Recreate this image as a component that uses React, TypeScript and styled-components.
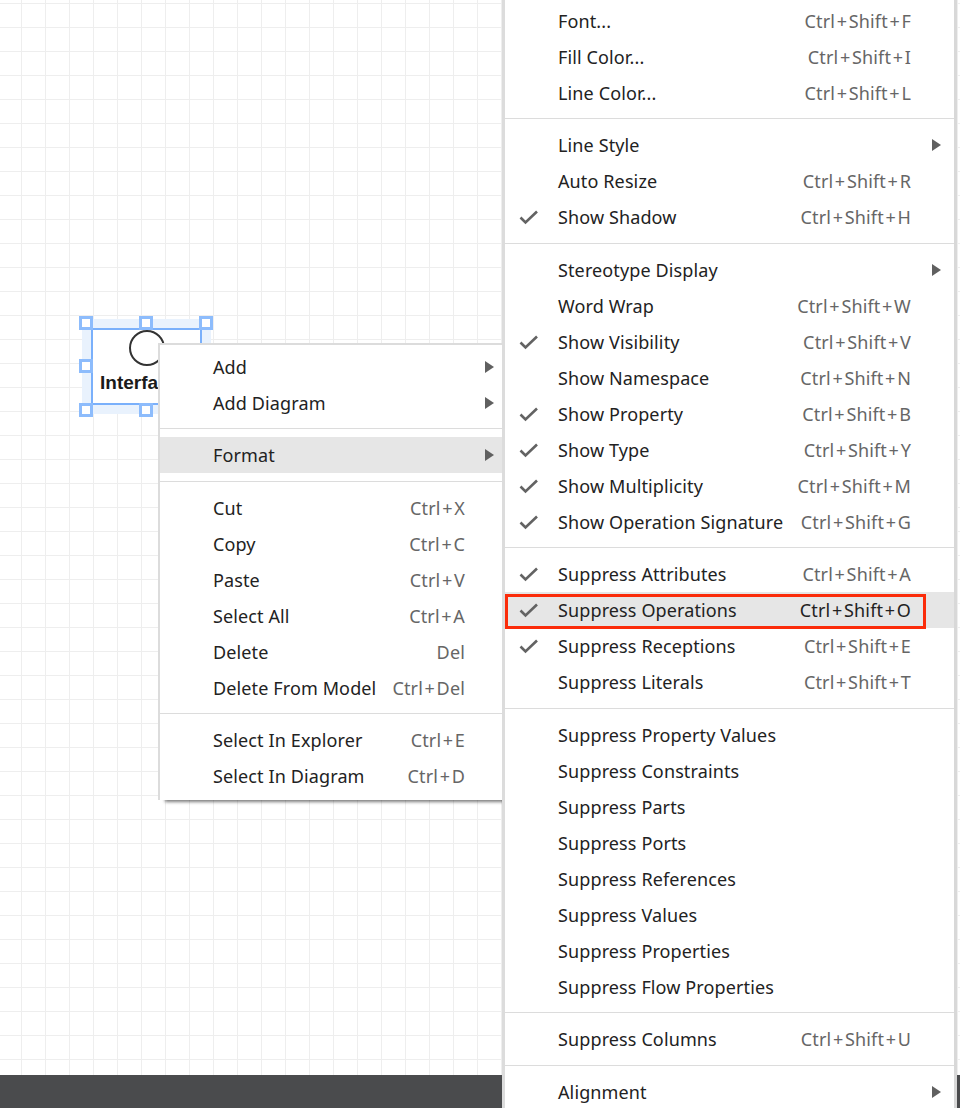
import React from "react";
import styled, { createGlobalStyle } from "styled-components";

const GlobalStyle = createGlobalStyle`
    html, body {
        margin: 0;
        padding: 0;
        background: #ffffff;
    }
`;

const Canvas = styled.div`
    position: relative;
    width: 960px;
    height: 1108px;
    overflow: hidden;
    display: flex;
    flex-direction: column;
    justify-content: flex-end;
    background-color: #ffffff;
    background-image:
        linear-gradient(to right, #eeeeee 1px, transparent 1px),
        linear-gradient(to bottom, #eeeeee 1px, transparent 1px);
    background-size: 24px 24px;
    background-position: 21px 3px;
    font-family: "Noto Sans", sans-serif;
`;

const BottomBar = styled.div`
    flex: none;
    height: 33px;
    background: #4a4b4d;
`;

const Node = styled.div`
    position: absolute;
    left: 91px;
    top: 328px;
    width: 111px;
    height: 77px;
    box-sizing: border-box;
    display: flex;
    flex-direction: column;
    align-items: center;
    gap: 6px;
    background: #ffffff;
    border: 2px solid #7ab0fb;
    box-shadow: 0 0 0 9px #e9f2fd;
`;

const NodeCircle = styled.div`
    flex: none;
    width: 36px;
    height: 36px;
    box-sizing: border-box;
    border: 2px solid #333333;
    border-radius: 50%;
    background: #ffffff;
`;

const NodeLabel = styled.span`
    align-self: flex-start;
    margin-left: 7px;
    font-family: "Liberation Sans", Arial, sans-serif;
    font-weight: 700;
    font-size: 19px;
    line-height: 22px;
    color: #1a1a1a;
    white-space: nowrap;
`;

const Handle = styled.div<{ $x: number; $y: number }>`
    position: absolute;
    left: ${(p) => p.$x - 7}px;
    top: ${(p) => p.$y - 7}px;
    width: 14px;
    height: 14px;
    box-sizing: border-box;
    background: #ffffff;
    border: 3px solid #8dbcfc;
`;

const Menu = styled.div<{ $left: number; $top: number; $width: number; $popup?: boolean }>`
    position: absolute;
    left: ${(p) => p.$left}px;
    top: ${(p) => p.$top}px;
    width: ${(p) => p.$width}px;
    box-sizing: border-box;
    display: flex;
    flex-direction: column;
    background: #ffffff;
    border-left: ${(p) => (p.$popup ? "2px" : "3px")} solid #dcdcdc;
    border-top: ${(p) => (p.$popup ? "2px solid #dcdcdc" : "none")};
    border-right: ${(p) => (p.$popup ? "none" : "3px solid #d8d8d8")};
    padding: ${(p) => (p.$popup ? "4px 0 6px" : "2.5px 0 0")};
    box-shadow: ${(p) => (p.$popup ? "6px 3px 3px -1px rgba(0, 0, 0, 0.5)" : "none")};
`;

const Row = styled.div<{ $active?: boolean; $gutter: number }>`
    flex: none;
    height: 36px;
    box-sizing: border-box;
    padding-left: 14px;
    display: grid;
    grid-template-columns: 39px 1fr auto ${(p) => p.$gutter}px;
    align-items: center;
    background: ${(p) => (p.$active ? "#e6e6e6" : "transparent")};
    font-size: 18px;
    color: #222222;
    white-space: nowrap;
`;

const Label = styled.span`
    grid-column: 2;
    letter-spacing: 0.12px;
`;

const Shortcut = styled.span<{ $active?: boolean }>`
    grid-column: 3;
    letter-spacing: 0.15px;
    color: ${(p) => (p.$active ? "#222222" : "#666666")};
`;

const Plus = styled.span`
    margin: 0 1.6px;
`;

const CheckMark = styled.svg`
    grid-column: 1;
    display: block;
    width: 20px;
    height: 16px;
`;

const Arrow = styled.svg<{ $offset: number }>`
    grid-column: 4;
    justify-self: end;
    display: block;
    width: 9px;
    height: 12px;
    margin-right: ${(p) => p.$offset}px;
`;

const Separator = styled.div`
    flex: none;
    height: 16.5px;
    display: flex;
    align-items: center;

    &::after {
        content: "";
        flex: 1;
        height: 1px;
        background: #dcdcdc;
    }
`;

const Highlight = styled.div`
    position: absolute;
    left: 505px;
    top: 594px;
    width: 421px;
    height: 35px;
    box-sizing: border-box;
    border: 3px solid #fb2c0a;
`;

type Item = {
    label?: string;
    shortcut?: string;
    checked?: boolean;
    submenu?: boolean;
    active?: boolean;
};

const SEP: Item = {};

const leftItems: Item[] = [
    { label: "Add", submenu: true },
    { label: "Add Diagram", submenu: true },
    SEP,
    { label: "Format", submenu: true, active: true },
    SEP,
    { label: "Cut", shortcut: "Ctrl+X" },
    { label: "Copy", shortcut: "Ctrl+C" },
    { label: "Paste", shortcut: "Ctrl+V" },
    { label: "Select All", shortcut: "Ctrl+A" },
    { label: "Delete", shortcut: "Del" },
    { label: "Delete From Model", shortcut: "Ctrl+Del" },
    SEP,
    { label: "Select In Explorer", shortcut: "Ctrl+E" },
    { label: "Select In Diagram", shortcut: "Ctrl+D" },
];

const rightItems: Item[] = [
    { label: "Font...", shortcut: "Ctrl+Shift+F" },
    { label: "Fill Color...", shortcut: "Ctrl+Shift+I" },
    { label: "Line Color...", shortcut: "Ctrl+Shift+L" },
    SEP,
    { label: "Line Style", submenu: true },
    { label: "Auto Resize", shortcut: "Ctrl+Shift+R" },
    { label: "Show Shadow", shortcut: "Ctrl+Shift+H", checked: true },
    SEP,
    { label: "Stereotype Display", submenu: true },
    { label: "Word Wrap", shortcut: "Ctrl+Shift+W" },
    { label: "Show Visibility", shortcut: "Ctrl+Shift+V", checked: true },
    { label: "Show Namespace", shortcut: "Ctrl+Shift+N" },
    { label: "Show Property", shortcut: "Ctrl+Shift+B", checked: true },
    { label: "Show Type", shortcut: "Ctrl+Shift+Y", checked: true },
    { label: "Show Multiplicity", shortcut: "Ctrl+Shift+M", checked: true },
    { label: "Show Operation Signature", shortcut: "Ctrl+Shift+G", checked: true },
    SEP,
    { label: "Suppress Attributes", shortcut: "Ctrl+Shift+A", checked: true },
    { label: "Suppress Operations", shortcut: "Ctrl+Shift+O", checked: true, active: true },
    { label: "Suppress Receptions", shortcut: "Ctrl+Shift+E", checked: true },
    { label: "Suppress Literals", shortcut: "Ctrl+Shift+T" },
    SEP,
    { label: "Suppress Property Values" },
    { label: "Suppress Constraints" },
    { label: "Suppress Parts" },
    { label: "Suppress Ports" },
    { label: "Suppress References" },
    { label: "Suppress Values" },
    { label: "Suppress Properties" },
    { label: "Suppress Flow Properties" },
    SEP,
    { label: "Suppress Columns", shortcut: "Ctrl+Shift+U" },
    SEP,
    { label: "Alignment", submenu: true },
];

// the pluses sit wider apart in the reference than the font sets them
function ShortcutText({ text }: { text: string }) {
    const parts = text.split("+");
    return (
        <>
            {parts.map((part, i) => (
                <React.Fragment key={i}>
                    {i > 0 && <Plus>+</Plus>}
                    {part}
                </React.Fragment>
            ))}
        </>
    );
}

function MenuRows({ items, gutter, arrowOffset }: { items: Item[]; gutter: number; arrowOffset: number }) {
    return (
        <>
            {items.map((item, i) =>
                item.label ? (
                    <Row key={i} $active={item.active} $gutter={gutter}>
                        {item.checked && (
                            <CheckMark viewBox="0 0 20 16">
                                <path d="M1.5 8.5 L6.5 13.5 L18 2.5" fill="none" stroke="#636363" strokeWidth="2.6" />
                            </CheckMark>
                        )}
                        <Label>{item.label}</Label>
                        {item.shortcut && (
                            <Shortcut $active={item.active}>
                                <ShortcutText text={item.shortcut} />
                            </Shortcut>
                        )}
                        {item.submenu && (
                            <Arrow $offset={arrowOffset} viewBox="0 0 9 12">
                                <path d="M0 0 L9 6 L0 12 Z" fill="#606060" />
                            </Arrow>
                        )}
                    </Row>
                ) : (
                    <Separator key={i} />
                )
            )}
        </>
    );
}

const handles = [
    [86, 323],
    [146, 323],
    [206, 323],
    [86, 366],
    [86, 410],
    [146, 410],
];

export default function App() {
    return (
        <>
            <GlobalStyle />
            <Canvas>
                <BottomBar />
                <Node>
                    <NodeCircle />
                    <NodeLabel>Interface</NodeLabel>
                </Node>
                {handles.map(([x, y]) => (
                    <Handle key={`${x}-${y}`} $x={x} $y={y} />
                ))}
                <Menu $popup $left={158} $top={342.5} $width={344}>
                    <MenuRows items={leftItems} gutter={37} arrowOffset={8} />
                </Menu>
                <Menu $left={502} $top={0} $width={455}>
                    <MenuRows items={rightItems} gutter={43} arrowOffset={13} />
                </Menu>
                <Highlight />
            </Canvas>
        </>
    );
}
